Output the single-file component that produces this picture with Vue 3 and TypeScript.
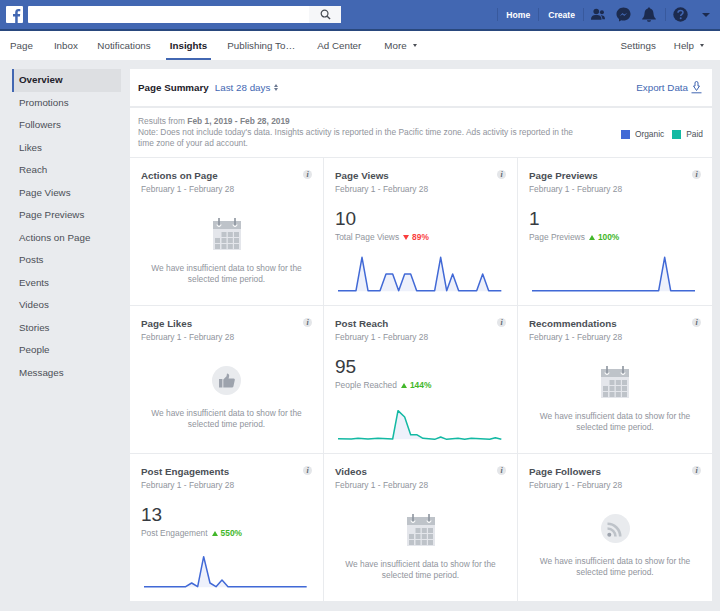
<script setup lang="ts">
interface Card {
  title: string
  icon?: 'cal' | 'like' | 'rss'
  value?: string
  label?: string
  change?: string
  down?: boolean
  teal?: boolean
  points?: string
}
const sideItems = ['Overview','Promotions','Followers','Likes','Reach','Page Views','Page Previews','Actions on Page','Posts','Events','Videos','Stories','People','Messages']
const cards: Card[] = [
  { title: 'Actions on Page', icon: 'cal' },
  { title: 'Page Views', value: '10', label: 'Total Page Views', change: '89%', down: true,
    points: '0,113 54,113 72,13 90,113 126,113 144,63 164,63 182,113 200,63 218,63 236,113 290,113 308,13 326,113 344,63 362,113 416,113 434,63 452,113 490,113' },
  { title: 'Page Previews', value: '1', label: 'Page Previews', change: '100%',
    points: '0,113 380,113 398,13 416,113 489,113' },
  { title: 'Page Likes', icon: 'like' },
  { title: 'Post Reach', value: '95', label: 'People Reached', change: '144%', teal: true,
    points: '0,113 40,114 60,112 90,114 120,112 164,114 180,29 200,48 218,101 236,101 255,112 290,115 308,108 326,115 360,112 380,115 400,112 455,115 472,110 490,115' },
  { title: 'Recommendations', icon: 'cal' },
  { title: 'Post Engagements', value: '13', label: 'Post Engagement', change: '550%',
    points: '0,113 125,113 143,102 161,113 179,23 198,102 216,113 234,93 252,113 488,113' },
  { title: 'Videos', icon: 'cal' },
  { title: 'Page Followers', icon: 'rss' },
]
function area(p: string): string {
  const first = p.split(' ')[0].split(',')[0]
  const last = p.split(' ').pop()!.split(',')[0]
  return `${first},115 ${p} ${last},115`
}
const calGrid: [number, number][] = [
  [8.5, 14], [14.8, 14], [21, 14],
  [2, 20], [8.5, 20], [14.8, 20], [21, 20],
  [2, 26], [8.5, 26], [14.8, 26], [21, 26],
]
</script>

<template>
  <div class="page">
    <header class="topbar">
      <div class="logo"><svg viewBox="0 0 17 17" width="17" height="17"><rect width="17" height="17" rx="1" fill="#fff"/><path d="M11.7 17v-6.5h2.2l.3-2.5h-2.5V6.4c0-.7.2-1.2 1.3-1.2h1.3V3c-.3 0-1-.1-1.9-.1-1.9 0-3.2 1.2-3.2 3.300V8H7v2.500h2.200V17z" fill="#4267b2"/></svg></div>
      <div class="search">
        <div class="search-btn"><svg viewBox="0 0 12 12" width="11" height="11"><circle cx="5" cy="5" r="3.700" fill="none" stroke="#444950" stroke-width="1.300"/><path d="M7.800 7.800 11 11" stroke="#444950" stroke-width="1.500"/></svg></div>
      </div>
      <div class="top-right">
        <span class="sep"></span>
        <span class="toplink tl-home">Home</span>
        <span class="sep"></span>
        <span class="toplink tl-create">Create</span>
        <span class="sep"></span>
        <svg class="ti ti-people" viewBox="0 0 16 14" width="14" height="13"><circle cx="6" cy="3.500" r="3.200" fill="#1c2b4f"/><path d="M0 13c0-4 2-5.500 6-5.500S12 9 12 13z" fill="#1c2b4f"/><circle cx="12.500" cy="4.500" r="2.300" fill="#1c2b4f"/><path d="M11 7.800c3 0 5 .8 5 4.700h-3c0-2-.7-3.500-2-4.700z" fill="#1c2b4f"/></svg>
        <svg class="ti ti-msg" viewBox="0 0 16 16" width="15" height="15"><path d="M8 .5C3.800.5.500 3.600.500 7.500c0 2.200 1 4.100 2.700 5.400V15.500l2.500-1.400c.7.200 1.500.300 2.300.300 4.200 0 7.500-3.100 7.500-7S12.200.5 8 .5z" fill="#1c2b4f"/><path d="M3.800 9.700 7 6.300l1.700 1.700 3.300-1.700-3.200 3.400L7.100 8z" fill="#4267b2"/></svg>
        <svg class="ti ti-bell" viewBox="0 0 14 15" width="14" height="15"><path d="M7 .5c.7 0 1.200.5 1.200 1.100C10.500 2.200 11.300 4 11.500 6.500c.2 2.400.8 3.800 2.300 5.200v.8H.2v-.8c1.500-1.400 2.100-2.800 2.300-5.200C2.700 4 3.500 2.200 5.800 1.600 5.800 1 6.300.5 7 .5zM5 13.300h4c0 1-.9 1.500-2 1.500s-2-.5-2-1.500z" fill="#1c2b4f"/></svg>
        <span class="sep sep-q"></span>
        <svg class="ti ti-q" viewBox="0 0 15 15" width="15" height="15"><circle cx="7.500" cy="7.500" r="7.200" fill="#1c2b4f"/><path d="M5 5.800C5 4.300 6.100 3.500 7.500 3.500S10 4.400 10 5.600c0 1.900-2.300 1.800-2.300 3.500" fill="none" stroke="#4267b2" stroke-width="1.500"/><circle cx="7.700" cy="11.200" r="1" fill="#4267b2"/></svg>
        <span class="top-caret"></span>
      </div>
    </header>

    <nav class="nav">
      <span class="n n-page">Page</span>
      <span class="n n-inbox">Inbox</span>
      <span class="n n-notif">Notifications</span>
      <span class="n n-ins active">Insights</span>
      <span class="n n-pub">Publishing To…</span>
      <span class="n n-ad">Ad Center</span>
      <span class="n n-more">More<i class="caret"></i></span>
      <span class="n n-set">Settings</span>
      <span class="n n-help">Help<i class="caret"></i></span>
    </nav>

    <div class="body">
      <aside class="side">
        <div v-for="(s, i) in sideItems" :key="s" class="side-item" :class="{ on: i === 0 }">{{ s }}</div>
      </aside>
      <main class="panel">
        <div class="head">
          <span class="head-title">Page Summary</span>
          <span class="head-range">Last 28 days</span>
          <svg class="updown" viewBox="0 0 4 7" width="4" height="7"><path d="M2 0 4 3H0zM2 7 0 4h4z" fill="#6d7a92"/></svg>
          <span class="export">Export Data</span>
          <svg class="export-i" viewBox="0 0 11 13" width="11" height="13"><path d="M4 5V2a1.500 1.500 0 0 1 3 0v3h1.500L5.500 9.500 2.500 5zM.5 11.800h10" fill="none" stroke="#4267b2" stroke-width="1"/></svg>
        </div>
        <div class="note">
          <div class="note-text">
            Results from <b>Feb 1, 2019 - Feb 28, 2019</b><br>
            Note: Does not include today's data. Insights activity is reported in the Pacific time zone. Ads activity is reported in the<br>
            time zone of your ad account.
          </div>
          <div class="legend">
            <i class="sw blue"></i><span class="lg-o">Organic</span>
            <i class="sw teal"></i><span>Paid</span>
          </div>
        </div>
        <div class="grid">
          <section v-for="c in cards" :key="c.title" class="card">
            <div class="card-top">
              <div class="card-title">{{ c.title }}</div>
              <span class="info">i</span>
            </div>
            <div class="card-date">February 1 - February 28</div>
            <template v-if="c.value">
              <div class="val">{{ c.value }}</div>
              <div class="lab"><span>{{ c.label }}</span>
                <svg class="tri" viewBox="0 0 6 5" width="6" height="5"><path v-if="c.down" d="M0 0h6L3 5z" fill="#fa3e3e"/><path v-else d="M3 0l3 5H0z" fill="#42b72a"/></svg>
                <b :class="c.down ? 'red' : 'green'">{{ c.change }}</b>
              </div>
              <svg class="chart" viewBox="0 0 492 120" width="164" height="40">
                <polygon :points="area(c.points!)" fill="#eef1fb"/>
                <polyline :points="c.points" fill="none" :stroke="c.teal ? '#13b9a3' : '#4169d6'" stroke-width="4.500" stroke-linejoin="round"/>
              </svg>
            </template>
            <div v-else class="empty">
              <svg v-if="c.icon === 'cal'" class="cal" viewBox="0 0 28 32" width="28" height="32">
                <rect y="3" width="28" height="29" fill="#e4e6eb"/>
                <rect y="3" width="28" height="8" fill="#bec3c9"/>
                <rect v-for="(p, i) in calGrid" :key="i" :x="p[0]" :y="p[1]" width="5" height="5" fill="#bec3c9"/>
                <path d="M4 6.500a2 2 0 0 0 4 0M20 6.500a2 2 0 0 0 4 0" fill="none" stroke="#fff" stroke-width="1"/>
                <path d="M6 0v7M22 0v7" stroke="#8d949e" stroke-width="1.600"/>
              </svg>
              <div v-else class="circle">
                <svg v-if="c.icon === 'like'" viewBox="0 0 16 14" width="16" height="15"><rect x="0" y="5.500" width="3.400" height="8.500" fill="#9da3ad"/><path d="M4.300 6 7.500 2.700 8 0c1.500 0 2.200 1 2.200 2.300 0 1-.4 2-.7 2.700H14.600c1 0 1.400.8 1.200 1.500L14.400 13c-.2.700-.7 1-1.400 1H4.300z" fill="#9da3ad"/></svg>
                <svg v-else viewBox="0 0 16 16" width="16" height="16"><circle cx="2.300" cy="13.700" r="2" fill="#9da3ad"/><path d="M.5 7.500a8 8 0 0 1 8 8M.5 2.800A12.700 12.700 0 0 1 13.200 15.500" fill="none" stroke="#bec3c9" stroke-width="2.600"/></svg>
              </div>
              <p class="msg">We have insufficient data to show for the<br>selected time period.</p>
            </div>
          </section>
        </div>
      </main>
    </div>
  </div>
</template>

<style>
html, body { margin: 0; background: #e9ebee; }
</style>

<style scoped>
.page { width: 720px; height: 611px; overflow: hidden; background: #e9ebee; font-family: "Liberation Sans", Arial, sans-serif; color: #4b4f56; }
.topbar { height: 29px; background: #4267b2; border-bottom: 2px solid #29487d; display: flex; align-items: center; padding: 0 6px; }
.logo { width: 17px; height: 17px; display: flex; }
.search { width: 313px; height: 17px; margin-left: 5px; background: #fff; border-radius: 1px; display: flex; justify-content: flex-end; }
.search-btn { width: 32px; background: #f6f7f9; display: flex; align-items: center; justify-content: center; }
.top-right { margin-left: auto; display: flex; align-items: center; }
.sep { width: 1px; height: 13px; background: #38599d; }
.toplink { color: #fff; font-weight: 700; font-size: 8.600px; }
.tl-home { padding: 0 8px; }
.tl-create { padding: 0 8px 0 9px; }
.ti { display: block; }
.ti-people { margin-left: 7px; }
.ti-msg { margin-left: 11px; }
.ti-bell { margin-left: 11px; }
.sep-q { margin-left: 9px; }
.ti-q { margin-left: 7px; }
.top-caret { margin: 0 4px 0 14px; border-top: 4px solid #1c2b4f; border-left: 4px solid transparent; border-right: 4px solid transparent; }
.nav { height: 29px; background: #fff; display: flex; align-items: center; font-size: 9.800px; }
.n { white-space: nowrap; line-height: 29px; height: 29px; box-sizing: border-box; }
.n-page { margin-left: 10px; }
.n-inbox { margin-left: 21px; }
.n-notif { margin-left: 19.500px; }
.n-ins { margin-left: 19px; }
.n-pub { margin-left: 20px; }
.n-ad { margin-left: 22px; }
.n-more { margin-left: 23px; }
.n-set { margin-left: auto; }
.n-help { margin-left: 18px; margin-right: 16px; }
.active { color: #1d2129; font-weight: 700; position: relative; }
.active::after { content: ""; position: absolute; left: -4px; right: -4px; bottom: 0; height: 2px; background: #4267b2; }
.caret { display: inline-block; margin-left: 6px; vertical-align: 2px; border-left: 2px solid transparent; border-right: 2px solid transparent; border-top: 3px solid #4b4f56; }
.body { display: flex; padding: 9px 8px 0 12px; align-items: flex-start; }
.side { width: 109px; margin-right: 9px; font-size: 9.800px; }
.side-item { height: 22.500px; line-height: 22.500px; padding-left: 7px; color: #4b4f56; box-sizing: border-box; }
.side-item.on { background: #dddfe2; border-left: 2px solid #4267b2; padding-left: 5px; color: #1d2129; font-weight: 700; }
.panel { width: 582px; height: 532px; background: #fff; }
.head { height: 37px; border-bottom: 2px solid #e9ebee; display: flex; align-items: center; padding: 0 10px 0 8px; font-size: 9.800px; }
.head-title { font-weight: 700; color: #1d2129; }
.head-range { color: #4267b2; margin-left: 6px; }
.updown { margin-left: 4px; }
.export { margin-left: auto; color: #4267b2; }
.export-i { margin-left: 3px; }
.note { height: 50px; box-sizing: border-box; border-bottom: 1px solid #e9ebee; display: flex; padding: 8px 9px 0 8px; position: relative; font-size: 8.400px; line-height: 11px; color: #90949c; }
.note-text { white-space: nowrap; }
.note-text b { color: #7f8389; }
.legend { position: absolute; right: 9px; top: 21px; display: flex; align-items: center; color: #4b4f56; font-size: 8.400px; }
.sw { width: 9px; height: 9px; margin-right: 5px; }
.sw.blue { background: #4169d6; }
.sw.teal { background: #13b9a3; }
.lg-o { margin-right: 8px; }
.grid { display: grid; grid-template-columns: 194px 194px 194px; grid-auto-rows: 148px; }
.card { box-sizing: border-box; border-right: 1px solid #e9ebee; border-bottom: 1px solid #e9ebee; padding: 12px 0 0 11px; }
.card:nth-child(3n) { border-right: 0; }
.card:nth-child(n+7) { border-bottom: 0; }
.card-top { display: flex; justify-content: space-between; padding-right: 11px; }
.card-title { font-size: 9.800px; font-weight: 700; color: #4b4f56; line-height: 12px; }
.info { width: 9px; height: 9px; border-radius: 50%; background: #e4e6e9; color: #606770; font-size: 8px; font-style: italic; font-weight: 700; line-height: 9px; text-align: center; font-family: "Liberation Serif", serif; }
.card-date { font-size: 8.400px; color: #90949c; line-height: 11px; margin-top: 2px; }
.val { font-size: 19px; line-height: 22px; color: #373b41; margin-top: 13px; }
.lab { font-size: 8.400px; color: #90949c; line-height: 11px; margin-top: 2px; white-space: nowrap; }
.lab b { font-weight: 700; }
.red { color: #fa3e3e; }
.green { color: #42b72a; }
.tri { margin: 0 3px 0 4px; }
.chart { display: block; margin: 10px 0 0 3px; }
.empty { margin: 23px 0 0 -11px; display: flex; flex-direction: column; align-items: center; }
.cal { display: block; }
.circle { width: 29px; height: 29px; border-radius: 50%; background: #e9ebee; display: flex; align-items: center; justify-content: center; }
.msg { margin: 13px 0 0; text-align: center; font-size: 8.400px; line-height: 11px; color: #90949c; }
</style>
